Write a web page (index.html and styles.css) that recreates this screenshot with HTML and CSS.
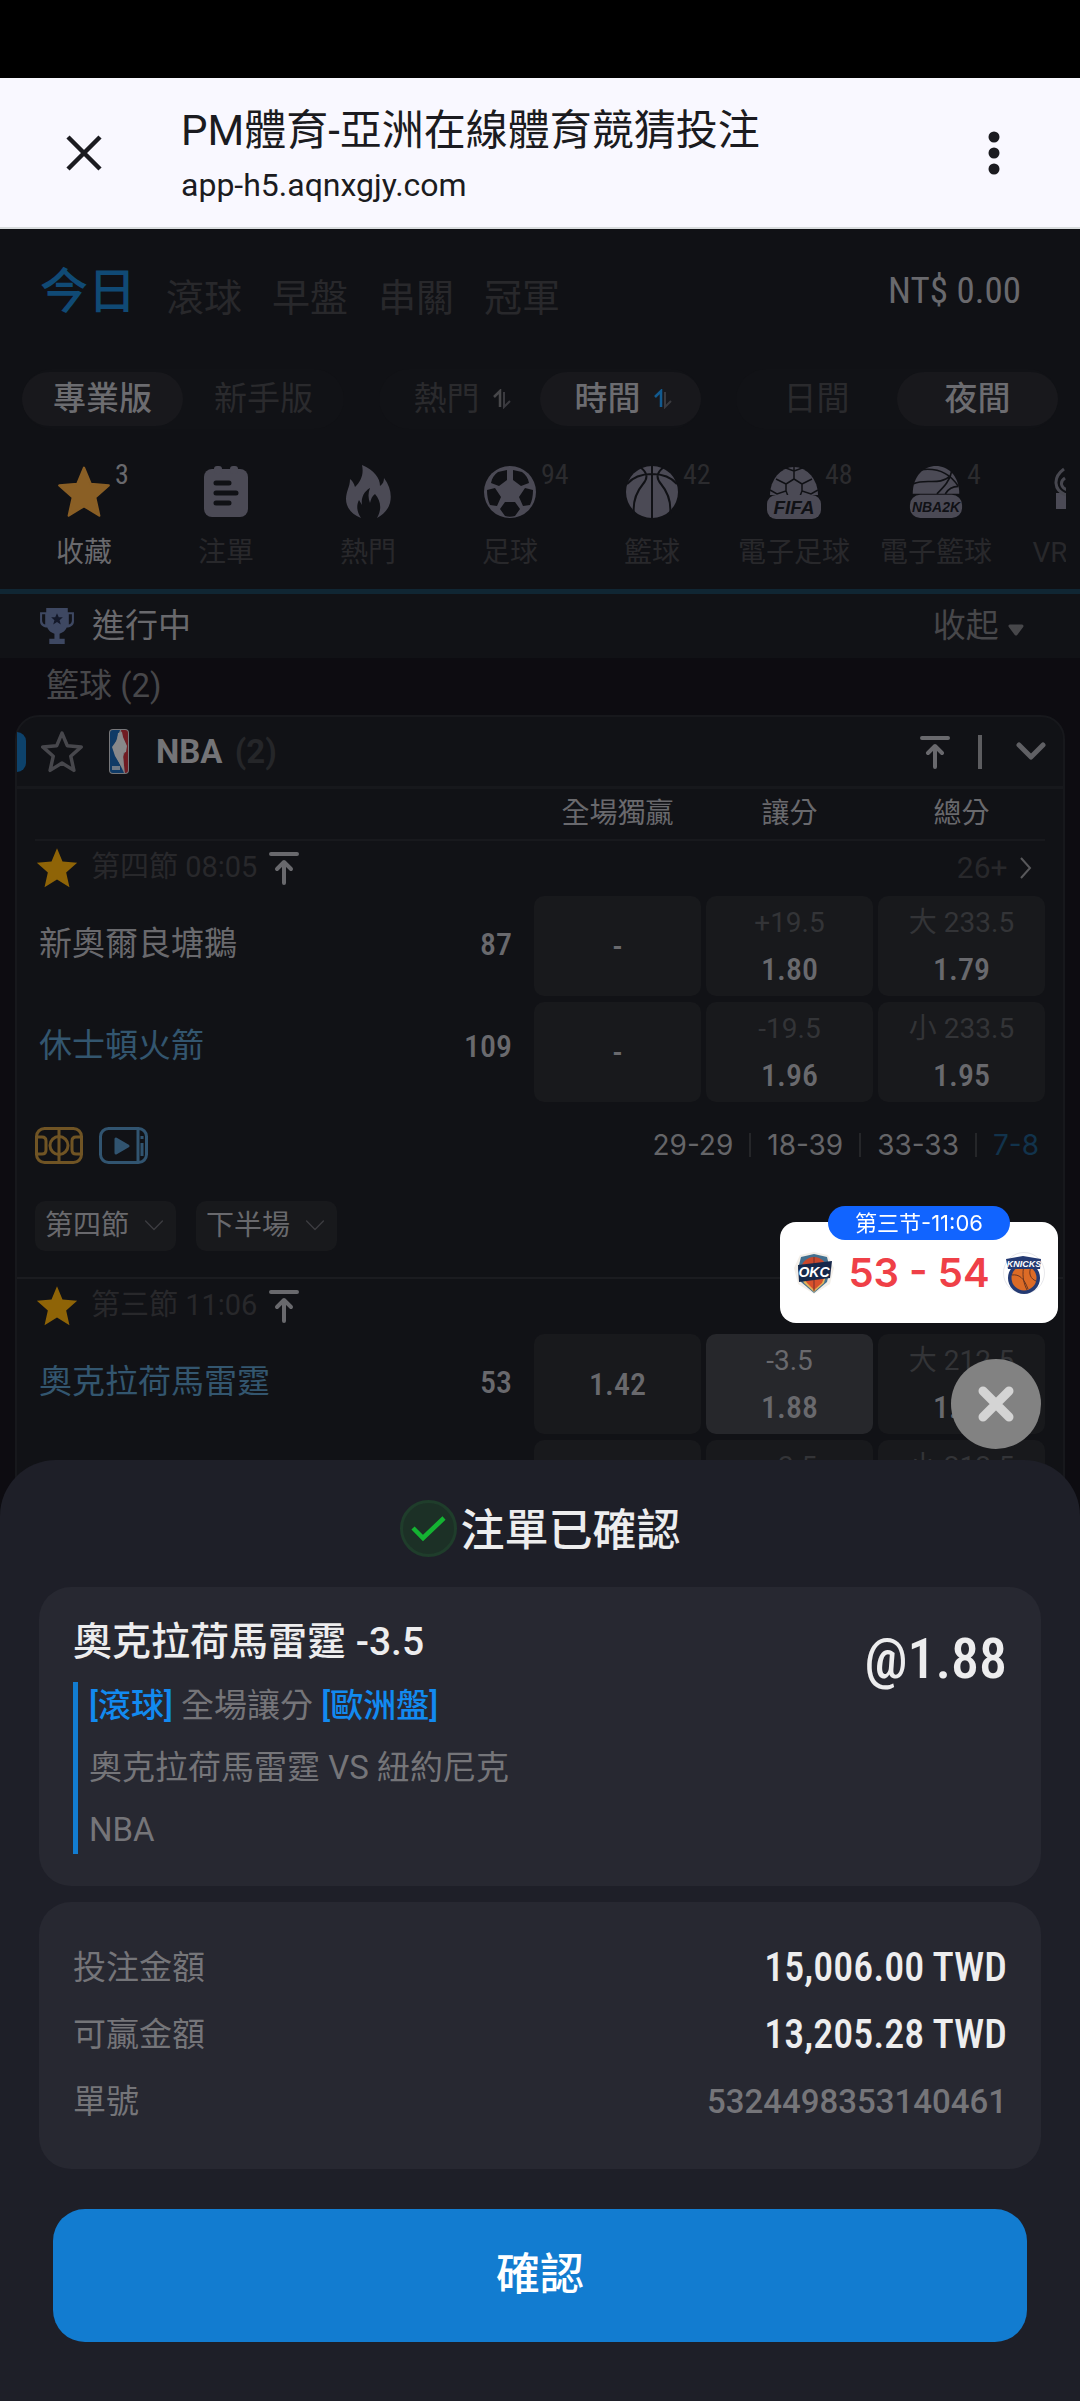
FILE: index.html
```html
<!DOCTYPE html>
<html lang="zh-Hant">
<head>
  <meta charset="UTF-8">
  <meta name="viewport" content="width=device-width, initial-scale=1.0">
  <title>PM體育-亞洲在線體育競猜投注</title>
  <link rel="stylesheet" href="styles.css">
</head>
<body>
  <svg class="defs" aria-hidden="true">
    <symbol id="star" viewBox="0 0 24 24">
      <path d="M12 1.2l3 7.2 8 .7-6 5.3 1.8 8.1-6.800-4.200-6.800 4.200L7 14.400 1 9.100l8-.7z" stroke-linejoin="round"/>
    </symbol>
    <symbol id="to-top" viewBox="0 0 30 34">
      <path d="M2 3h26M15 32V12M8 18l7-7 7 7" fill="none" stroke="currentColor" stroke-width="4" stroke-linecap="round" stroke-linejoin="round"/>
    </symbol>
    <symbol id="down" viewBox="0 0 30 20">
      <path d="M3 3l12 12L27 3" fill="none" stroke="currentColor" stroke-linecap="round" stroke-linejoin="round"/>
    </symbol>
    <symbol id="sort" viewBox="0 0 20 20">
      <path d="M2 8l6-6v16" fill="none" stroke-width="2.500"/>
      <path d="M12 3v15l6-6" fill="none" stroke="#3a3a3f" stroke-width="2"/>
    </symbol>
  </svg>

  <div class="status-bar"></div>
  <div class="browser-bar">
    <button class="bar-btn" aria-label="關閉">
      <svg width="36" height="36" viewBox="0 0 36 36"><path d="M2 2l32 32M34 2L2 34" stroke="#1b1b20" stroke-width="4.500"/></svg>
    </button>
    <div class="site">
      <div class="site-title">PM體育-亞洲在線體育競猜投注</div>
      <div class="site-url">app-h5.aqnxgjy.com</div>
    </div>
    <button class="bar-btn" aria-label="更多">
      <svg width="12" height="46" viewBox="0 0 12 46"><g fill="#1b1b20"><circle cx="6" cy="7" r="5.500"/><circle cx="6" cy="23" r="5.500"/><circle cx="6" cy="39" r="5.500"/></g></svg>
    </button>
  </div>

  <header class="app-header">
    <nav class="tabs">
      <a class="active" href="#">今日</a>
      <a href="#">滾球</a>
      <a href="#">早盤</a>
      <a href="#">串關</a>
      <a href="#">冠軍</a>
      <span class="balance">NT$ 0.00</span>
    </nav>

    <div class="switches">
      <div class="switch">
        <button class="on">專業版</button>
        <button>新手版</button>
      </div>
      <div class="switch">
        <button>熱門<svg class="sort"><use href="#sort"/></svg></button>
        <button class="on">時間<svg class="sort sort-active"><use href="#sort"/></svg></button>
      </div>
      <div class="switch">
        <button>日間</button>
        <button class="on">夜間</button>
      </div>
    </div>

    <nav class="sports">
      <a class="sport active" href="#">
        <span class="sport-icon"><svg class="gold" viewBox="0 0 24 24"><use href="#star"/></svg><i>3</i></span>
        收藏
      </a>
      <a class="sport" href="#">
        <span class="sport-icon">
          <svg viewBox="0 0 52 54">
            <rect x="4" y="4" width="44" height="48" rx="8"/>
            <rect x="14" y="1" width="8" height="8" rx="3"/><rect x="30" y="1" width="8" height="8" rx="3"/>
            <path class="cut" d="M16 18h13M16 28h20M16 38h13" stroke-width="5" stroke-linecap="round"/>
          </svg>
        </span>
        注單
      </a>
      <a class="sport" href="#">
        <span class="sport-icon">
          <svg viewBox="0 0 52 54">
            <path d="M20 0c12 5 18 13 18 21 3-2 4-5 4-8 6 8 8 17 6 25-2 7-7 12-13 15 5-9 4-17-2-24-3 2-4 5-5 9-2-5-2-10 0-15-7 4-9 11-8 17l-3-5c-3 6-2 12 2 18C9 49 4 42 4 34c0-8 4-12 4-20 3 2 4 5 5 8 6-6 9-13 7-22z"/>
          </svg>
        </span>
        熱門
      </a>
      <a class="sport" href="#">
        <span class="sport-icon">
          <svg viewBox="0 0 52 54">
            <circle cx="26" cy="27" r="26"/>
            <g class="hole">
              <path d="M14 7l9-2v10l-8 6-8-3c1-5 3-8 7-11zM38 7l-9-2v10l8 6 8-3c-1-5-3-8-7-11zM3 25l8-2 6 9-4 9-7-1C4 36 3 31 3 25zM49 25l-8-2-6 9 4 9 7-1c2-4 3-9 3-15zM21 37h10l5 7-5 7c-3 1-7 1-10 0l-5-7z"/>
            </g>
          </svg>
          <i>94</i>
        </span>
        足球
      </a>
      <a class="sport" href="#">
        <span class="sport-icon">
          <svg viewBox="0 0 52 54">
            <circle cx="26" cy="27" r="26"/>
            <path class="cut" d="M26 0v54M1 19c6-7 14-10 25-10s19 3 25 10M14 2c8 6 8 11 3 17S6 34 8 50M38 2c-8 6-8 11-3 17s11 15 9 31" stroke-width="2"/>
          </svg>
          <i>42</i>
        </span>
        籃球
      </a>
      <a class="sport" href="#">
        <span class="sport-icon">
          <svg viewBox="0 0 54 54">
            <path d="M3 30a24 28 0 0 1 48 0z"/>
            <path class="cut" d="M27 6V0M27 6l-11-4M27 6l11-4M27 6v8M27 14l-8 5v7l-9 3-7-4M19 26l2 5M27 14l8 5v7l9 3 7-4M35 26l-2 5M19 19l-10-5M35 19l10-5" stroke-width="1.500"/>
            <rect x="0" y="30" width="54" height="24" rx="9"/>
            <text x="27" y="49" class="logo-text" font-size="19">FIFA</text>
          </svg>
          <i>48</i>
        </span>
        電子足球
      </a>
      <a class="sport" href="#">
        <span class="sport-icon">
          <svg viewBox="0 0 56 58">
            <path d="M3 31C3-9 53-9 53 31z"/>
            <path class="cut" d="M4 20c14-6 28 3 40-9M12 5c16-2 30 2 40 18M45 6c-2 11-8 17-16 25M38 31c3-5 8-8 14-8" stroke-width="1.800"/>
            <rect x="0" y="32" width="56" height="25" rx="11"/>
            <text x="28" y="50" class="logo-text" font-size="15">NBA2K</text>
          </svg>
          <i>4</i>
        </span>
        電子籃球
      </a>
      <a class="sport" href="#">
        <span class="sport-icon">
          <svg viewBox="0 0 52 54">
            <path d="M4 44V28h44v16z"/>
            <path d="M12 4C1 12 1 25 14 30M13 13c-6 4-4 11 4 12" fill="none" stroke="currentColor" stroke-width="3"/>
          </svg>
        </span>
        VR足球
      </a>
    </nav>
  </header>

  <main>
    <div class="live-row">
      <svg class="trophy" viewBox="0 0 37 37">
        <path d="M8 1h21v4h6v9c0 4-4 6-7 6-2 4-4 5-7 6v5h5v5H11v-5h5v-5c-3-1-5-2-7-6-3 0-7-2-7-6V5h6z" fill="#3e4862"/>
        <path d="M4 7h3v10c-2 0-3-2-3-4zM33 7h-3v10c2 0 3-2 3-4z" fill="#111217"/>
        <path d="M18.500 6l1.700 4h4l-3.200 3 1.200 4-3.700-2.300-3.700 2.300 1.200-4-3.200-3h4z" fill="#14192a"/>
      </svg>
      <h2>進行中</h2>
      <button class="collapse">收起 <svg width="18" height="13" viewBox="0 0 18 13"><path d="M3 2h12l-6 8z" fill="#47474a" stroke="#47474a" stroke-width="3" stroke-linejoin="round"/></svg></button>
    </div>
    <div class="group-name">籃球 (2)</div>

    <section class="league">
      <div class="league-head">
        <span class="mark"></span>
        <svg class="fav-empty" viewBox="0 0 24 24"><use href="#star"/></svg>
        <svg class="nba" viewBox="0 0 20 45">
          <rect width="20" height="45" rx="4" fill="#77777a"/>
          <path d="M4 1h7L6 15l1 12 8 17H4c-2 0-3-1-3-3V4c0-2 1-3 3-3z" fill="#0f3a66"/>
          <path d="M12 1h4c2 0 3 1 3 3v37c0 2-1 3-3 3l-2-16 3-8-3-10z" fill="#701b22"/>
          <path d="M9 4l4-1 1 5 4 9-1 6-3 1 1 18L6 27 3 18l5-7z" fill="#88888a"/>
          <path d="M3 37h8v4H3z" fill="#6d7885"/>
        </svg>
        <h3>NBA <span>(2)</span></h3>
        <button class="icon-btn" aria-label="置頂"><svg class="to-top"><use href="#to-top"/></svg></button>
        <span class="bar"></span>
        <button class="icon-btn" aria-label="收合"><svg class="chev-bold"><use href="#down"/></svg></button>
      </div>

      <div class="columns">
        <span>全場獨贏</span><span>讓分</span><span>總分</span>
      </div>

      <article class="match">
        <div class="match-info">
          <svg class="fav" viewBox="0 0 24 24"><use href="#star"/></svg>
          <span class="clock">第四節 08:05</span>
          <svg class="to-top"><use href="#to-top"/></svg>
          <a class="more" href="#">26+ <svg width="14" height="24" viewBox="0 0 14 24"><path d="M2 2l9 10-9 10" fill="none" stroke="#58585b" stroke-width="2"/></svg></a>
        </div>
        <div class="board">
          <div class="teams">
            <div class="team"><span>新奧爾良塘鵝</span><b>87</b></div>
            <div class="team lead"><span>休士頓火箭</span><b>109</b></div>
          </div>
          <button class="odd"><b>-</b></button>
          <button class="odd"><small>+19.5</small><b>1.80</b></button>
          <button class="odd"><small>大 233.5</small><b>1.79</b></button>
          <button class="odd"><b>-</b></button>
          <button class="odd"><small>-19.5</small><b>1.96</b></button>
          <button class="odd"><small>小 233.5</small><b>1.95</b></button>
        </div>
        <div class="extras">
          <svg width="48" height="37" viewBox="0 0 48 37" fill="none" stroke="#705424" stroke-width="3">
            <rect x="1.500" y="1.500" width="45" height="34" rx="8"/>
            <circle cx="24" cy="18.500" r="9"/>
            <path d="M24 2v33M2 10h5c3 0 4 2 4 4v9c0 2-1 4-4 4H2M46 10h-5c-3 0-4 2-4 4v9c0 2 1 4 4 4h5"/>
          </svg>
          <svg width="49" height="37" viewBox="0 0 49 37" fill="none" stroke="#315470" stroke-width="3">
            <rect x="1.500" y="1.500" width="46" height="34" rx="8"/>
            <path d="M39 2v33M43 9v3M43 16v13"/>
            <path d="M17 12v14l12-7z" fill="#315470" stroke-linejoin="round"/>
          </svg>
          <ul class="periods">
            <li>29-29</li><li>18-39</li><li>33-33</li><li class="now">7-8</li>
          </ul>
        </div>
        <div class="filters">
          <button>第四節<svg class="chev-thin"><use href="#down"/></svg></button>
          <button>下半場<svg class="chev-thin"><use href="#down"/></svg></button>
        </div>
      </article>

      <article class="match">
        <div class="match-info">
          <svg class="fav" viewBox="0 0 24 24"><use href="#star"/></svg>
          <span class="clock">第三節 11:06</span>
          <svg class="to-top"><use href="#to-top"/></svg>
        </div>
        <div class="board">
          <div class="teams">
            <div class="team lead"><span>奧克拉荷馬雷霆</span><b>53</b></div>
          </div>
          <button class="odd"><b>1.42</b></button>
          <button class="odd picked"><small>-3.5</small><b>1.88</b></button>
          <button class="odd"><small>大 212.5</small><b>1.88</b></button>
          <button class="odd"></button>
          <button class="odd"><small>+3.5</small><b>&nbsp;</b></button>
          <button class="odd"><small>小 212.5</small><b>&nbsp;</b></button>
        </div>
      </article>
    </section>
  </main>

  <div class="sheet">
    <div class="floaters">
      <div class="score-card">
        <div class="score-time">第三节-11:06</div>
        <svg width="42" height="44" viewBox="0 0 42 44">
          <path d="M21 1l14 3 6 13-4 16-16 10L5 33 1 17 7 4z" fill="#f3efe9"/>
          <path d="M21 3l13 3 3 12-3 13-13 11L8 31 5 18 8 6z" fill="#43708f"/>
          <path d="M8 25l26-4-3 11-10 9-10-9z" fill="#e2b35a"/>
          <circle cx="21" cy="19" r="13" fill="#c9492c"/>
          <path d="M11 27l21-3-3 8-8 7-7-7z" fill="#d8502c"/>
          <path d="M21 6v34M9 14c8 4 16 4 24 0" stroke="#73302a" fill="none"/>
          <path d="M5 14l34-4-2 17-31 4z" fill="#16284a"/>
          <text x="21" y="26" class="okc-text">OKC</text>
        </svg>
        <strong>53 - 54</strong>
        <svg width="42" height="44" viewBox="0 0 42 44">
          <circle cx="21" cy="22" r="20.500" fill="#fff" stroke="#e8e8ec"/>
          <circle cx="21" cy="27" r="16" fill="#243a72"/>
          <circle cx="21" cy="27" r="12.500" fill="#dc6b26"/>
          <path d="M21 14c-2 9-1 17 3 25M9 24c7-1 12 3 16 14M28 16c-3 7 0 12 5 14" stroke="#6b3520" fill="none"/>
          <path d="M3 8l17-3 18 3-1 10H5z" fill="#243a72"/>
          <text x="21" y="16" class="knicks-text">KNICKS</text>
        </svg>
      </div>
      <button class="float-close" aria-label="關閉">
        <svg width="36" height="36" viewBox="0 0 36 36"><path d="M5 5l26 26M31 5L5 31" stroke="#d4d4d4" stroke-width="9" stroke-linecap="round"/></svg>
      </button>
    </div>

    <h1>
      <svg width="57" height="57" viewBox="0 0 57 57">
        <circle cx="28.500" cy="28.500" r="27" fill="#1c3026" stroke="#1f3d2b" stroke-width="3"/>
        <path d="M13 28l10 10 21-20" fill="none" stroke="#14b332" stroke-width="4.500"/>
      </svg>
      <span>注單已確認</span>
    </h1>

    <section class="card bet">
      <div>
        <h2>奧克拉荷馬雷霆 -3.5</h2>
        <div class="bet-info">
          <p><em>[滾球]</em> 全場讓分 <em>[歐洲盤]</em></p>
          <p>奧克拉荷馬雷霆 VS 紐約尼克</p>
          <p>NBA</p>
        </div>
      </div>
      <span class="price">@1.88</span>
    </section>

    <dl class="card receipt">
      <div><dt>投注金額</dt><dd>15,006.00 TWD</dd></div>
      <div><dt>可贏金額</dt><dd>13,205.28 TWD</dd></div>
      <div><dt>單號</dt><dd class="order-no">5324498353140461</dd></div>
    </dl>

    <button class="confirm">確認</button>
  </div>
</body>
</html>
```
FILE: styles.css
```css
* {
  margin: 0;
  padding: 0;
  box-sizing: border-box;
}

body {
  min-height: 100vh;
  overflow: hidden;
  background: #0d0c11;
  color: #69696d;
  font-family: Roboto, "Noto Sans CJK TC", sans-serif;
  font-size: 33px;
  line-height: 1.2;
}

a {
  color: inherit;
  text-decoration: none;
}

button {
  border: none;
  background: none;
  color: inherit;
  font: inherit;
  cursor: pointer;
}

svg {
  flex-shrink: 0;
}

.defs {
  position: absolute;
  width: 0;
  height: 0;
}

/* browser bar */
.status-bar {
  height: 78px;
  background: #000;
}

.browser-bar {
  display: flex;
  align-items: center;
  height: 151px;
  padding: 0 56px 0 36px;
  background: #f9f8ff;
  border-bottom: 2px solid #d9dcde;
}

.bar-btn {
  display: flex;
  justify-content: center;
  min-width: 60px;
}

.bar-btn:first-child {
  justify-content: flex-start;
  min-width: 145px;
  padding-left: 30px;
}

.site {
  flex: 1;
  padding-top: 8px;
  color: #1b1b20;
}

.site-title {
  font-size: 42px;
  line-height: 56px;
}

.site-url {
  font-size: 32px;
  line-height: 52px;
}

/* header */
.app-header {
  background: #101115;
  border-bottom: 5px solid #102633;
}

.tabs {
  display: flex;
  align-items: flex-start;
  gap: 30px;
  height: 140px;
  padding: 34px 59px 0 40px;
  color: #28282b;
  font-size: 38px;
  line-height: 70px;
}

.tabs .active {
  color: #104a75;
  font-size: 48px;
  font-weight: 500;
  line-height: 58px;
}

.balance {
  margin-left: auto;
  color: #69696d;
  font-family: "Roboto Condensed", sans-serif;
  font-size: 37px;
  line-height: 56px;
}

.switches {
  display: grid;
  grid-template-columns: repeat(3, 1fr);
  gap: 35px;
  padding: 0 22px;
}

.switch {
  display: grid;
  grid-template-columns: 1fr 1fr;
  padding: 3px 0;
  border-radius: 30px;
  background: #111216;
  color: #2a2a2d;
}

.switch button {
  display: flex;
  align-items: center;
  justify-content: center;
  height: 54px;
  border-radius: 27px;
}

.switch .on {
  background: #18181c;
  color: #6c6c70;
  font-weight: 500;
}

.sort {
  width: 20px;
  height: 20px;
  margin: 0 -6px 0 12px;
  stroke: #47474a;
}

.sort-active {
  stroke: #125a8f;
}

.sports {
  display: flex;
  gap: 2px;
  height: 160px;
  margin: 0 14px;
  padding-top: 36px;
  overflow: hidden;
}

.sport {
  display: flex;
  flex: 0 0 140px;
  flex-direction: column;
  align-items: center;
  color: #28282b;
  font-size: 28px;
  line-height: 40px;
}

.sport.active {
  color: #69696d;
}

.sport-icon {
  position: relative;
  display: flex;
  height: 54px;
  margin-bottom: 14px;
  color: #47474f;
}

.sport-icon svg {
  width: 54px;
  height: 54px;
  fill: #4b4a55;
}

.sport-icon .gold {
  fill: #8a5f25;
  stroke: #8a5f25;
}

.sport-icon .cut {
  fill: none;
  stroke: #101115;
}

.sport-icon .hole {
  fill: #101115;
}

.logo-text {
  fill: #101115;
  font-family: "Liberation Sans", sans-serif;
  font-style: italic;
  font-weight: 700;
  text-anchor: middle;
}

.sport-icon i {
  position: absolute;
  top: -6px;
  left: 100%;
  padding-left: 4px;
  color: #2b2b2e;
  font-family: "Roboto Condensed", sans-serif;
  font-size: 28px;
  font-style: normal;
  line-height: 32px;
}

.active .sport-icon i {
  color: #69696d;
}

/* match list */
.live-row {
  display: flex;
  align-items: center;
  height: 64px;
  padding: 0 55px 0 38px;
  background: #111216;
}

.live-row h2 {
  margin-left: 16px;
  font-size: 33px;
  font-weight: 400;
}

.trophy {
  width: 38px;
  height: 38px;
}

.collapse {
  margin-left: auto;
  color: #47474a;
}

.group-name {
  height: 57px;
  padding-left: 46px;
  color: #47474a;
  line-height: 55px;
}

.league {
  margin: 0 15px;
  border: 2px solid #17181c;
  border-radius: 24px;
  background: #111216;
}

.league-head {
  display: flex;
  align-items: center;
  height: 72px;
  padding-right: 17px;
  border-bottom: 3px solid #17181c;
}

.mark {
  width: 9px;
  height: 40px;
  border-radius: 0 9px 9px 0;
  background: #0d426b;
}

.fav-empty {
  width: 42px;
  height: 42px;
  margin-left: 15px;
  fill: none;
  stroke: #47474c;
  stroke-width: 2;
}

.nba {
  width: 20px;
  height: 45px;
  margin-left: 26px;
}

.league-head h3 {
  flex: 1;
  margin-left: 27px;
  color: #747477;
  font-size: 33px;
  line-height: 40px;
}

.league-head h3 span {
  margin-left: 4px;
  color: #252629;
}

.icon-btn {
  display: flex;
}

.to-top {
  width: 30px;
  height: 34px;
  color: #69696d;
}

.bar {
  width: 4px;
  height: 34px;
  margin: 0 34px 0 28px;
  background: #5d5d60;
}

.chev-bold {
  width: 30px;
  height: 20px;
  color: #606064;
  stroke-width: 5;
}

.columns {
  display: grid;
  grid-template-columns: repeat(3, 167px);
  gap: 5px;
  justify-content: end;
  margin: 0 18px;
  border-bottom: 2px solid #18191d;
  font-size: 28px;
  line-height: 50px;
  text-align: center;
}

.match {
  padding: 0 18px;
}

.match + .match {
  border-top: 2px solid #1b1c20;
}

.match-info {
  display: flex;
  align-items: center;
  height: 55px;
  padding-bottom: 2px;
  color: #28282b;
  font-size: 30px;
}

.fav {
  width: 44px;
  height: 44px;
  fill: #8f6407;
}

.clock {
  margin: 0 12px;
  font-size: 29px;
}

.more {
  margin-left: auto;
  padding-right: 12px;
}

.more svg {
  margin-left: 4px;
  vertical-align: -2px;
}

.board {
  display: grid;
  grid-template-columns: 1fr repeat(3, 167px);
  grid-auto-rows: 100px;
  gap: 6px 5px;
}

.teams {
  grid-row: span 2;
  padding: 0 17px 0 4px;
}

.team {
  display: flex;
  align-items: center;
  justify-content: space-between;
  height: 102px;
  padding-bottom: 6px;
}

.team b {
  font-family: "Roboto Condensed", sans-serif;
  font-size: 32px;
  font-weight: 500;
}

.team.lead span {
  color: #33566f;
}

.odd {
  display: flex;
  flex-direction: column;
  align-items: center;
  justify-content: center;
  gap: 6px;
  border-radius: 10px;
  background: #18191c;
}

.odd small {
  color: #333437;
  font-size: 28px;
  line-height: 40px;
}

.odd b {
  font-family: "Roboto Condensed", sans-serif;
  font-size: 32px;
  font-weight: 500;
  line-height: 40px;
}

.odd.picked {
  background: #26272b;
}

.odd.picked small {
  color: #69696d;
}

.extras {
  display: flex;
  align-items: center;
  gap: 16px;
  height: 86px;
}

.periods {
  display: flex;
  margin-left: auto;
  padding-right: 6px;
  color: #656568;
  font-family: Inter, sans-serif;
  font-size: 28px;
  line-height: 24px;
  list-style: none;
}

.periods li + li {
  margin-left: 16px;
  padding-left: 16px;
  border-left: 2px solid #252629;
}

.periods .now {
  color: #12334c;
}

.filters {
  display: flex;
  gap: 20px;
  padding: 13px 0 26px;
}

.filters button {
  display: flex;
  align-items: center;
  gap: 14px;
  height: 50px;
  padding: 0 11px 0 10px;
  border-radius: 10px;
  background: #18191c;
  font-size: 28px;
}

.chev-thin {
  width: 22px;
  height: 14px;
  color: #3c3c40;
  stroke-width: 2;
}

/* floating score and close button */
.floaters {
  position: absolute;
  right: 22px;
  bottom: 100%;
  display: flex;
  flex-direction: column;
  align-items: flex-end;
  gap: 36px;
  padding-bottom: 11px;
}

.score-card {
  position: relative;
  display: flex;
  align-items: center;
  justify-content: space-between;
  width: 278px;
  height: 101px;
  padding: 0 13px;
  border-radius: 16px;
  background: #fff;
}

.score-card strong {
  color: #ef4047;
  font-family: Inter, sans-serif;
  font-size: 40px;
  font-weight: 600;
}

.score-time {
  position: absolute;
  top: -16px;
  left: 48px;
  right: 48px;
  border-radius: 17px;
  background: #1164ff;
  color: #fff;
  font-family: Inter, "Noto Sans CJK SC", sans-serif;
  font-size: 22px;
  line-height: 34px;
  text-align: center;
}

.okc-text,
.knicks-text {
  fill: #fff;
  font-family: "Liberation Sans", sans-serif;
  font-size: 14px;
  font-style: italic;
  font-weight: 700;
  text-anchor: middle;
}

.knicks-text {
  font-size: 9px;
}

.float-close {
  display: flex;
  align-items: center;
  justify-content: center;
  width: 90px;
  height: 90px;
  margin-right: 17px;
  border-radius: 50%;
  background: #828282;
}

/* bet slip sheet */
.sheet {
  position: fixed;
  right: 0;
  bottom: 0;
  left: 0;
  padding: 40px 39px 59px;
  border-radius: 56px 56px 0 0;
  background: #1e1f28;
  color: #ededee;
}

.sheet h1 {
  display: flex;
  align-items: center;
  justify-content: center;
  gap: 4px;
  height: 57px;
  margin-bottom: 30px;
  font-size: 44px;
  font-weight: 500;
}

.sheet h1 span {
  padding-top: 6px;
}

.card {
  margin-bottom: 16px;
  border-radius: 32px;
  background: #272831;
}

.bet {
  display: flex;
  justify-content: space-between;
  padding: 30px 34px 32px;
}

.bet h2 {
  margin-bottom: 15px;
  font-size: 39px;
  font-weight: 500;
  line-height: 50px;
}

.bet-info {
  display: grid;
  gap: 14px;
  padding-left: 11px;
  border-left: 5px solid #127cd0;
  color: #757579;
  line-height: 48px;
}

.bet-info em {
  color: #128af0;
  font-style: normal;
  font-weight: 500;
}

.price {
  font-family: "Roboto Condensed", sans-serif;
  font-size: 56px;
  font-weight: 500;
  line-height: 84px;
}

.receipt {
  margin-bottom: 40px;
  padding: 32px 34px 34px;
}

.receipt div {
  display: flex;
  justify-content: space-between;
  line-height: 67px;
}

.receipt dt {
  color: #757579;
}

.receipt dd {
  font-family: "Roboto Condensed", sans-serif;
  font-size: 40px;
  font-weight: 500;
}

.receipt .order-no {
  color: #757579;
  font-family: Roboto, sans-serif;
  font-size: 33px;
}

.confirm {
  display: block;
  width: calc(100% - 28px);
  height: 133px;
  margin: 0 auto;
  border-radius: 32px;
  background: #127cd0;
  color: #fff;
  font-size: 44px;
  font-weight: 500;
}
```
